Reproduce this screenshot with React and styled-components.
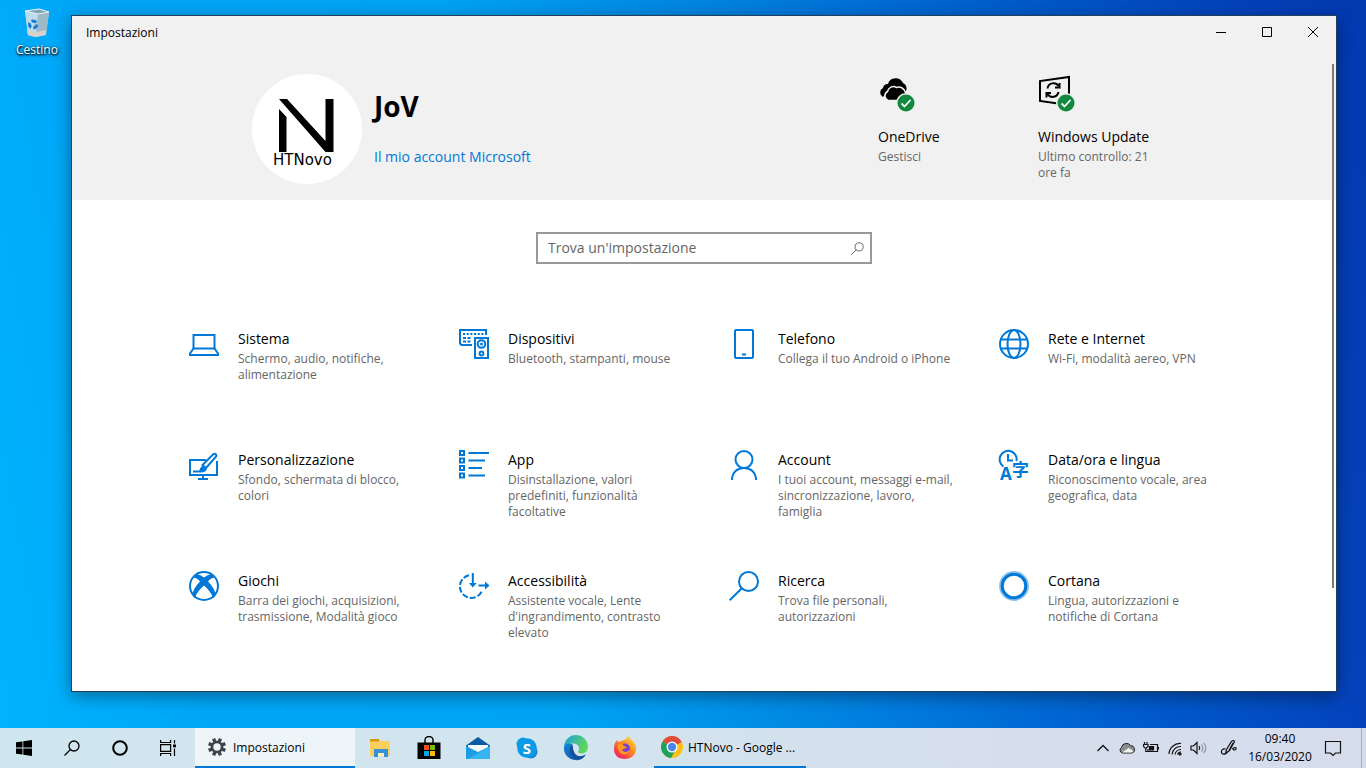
import React from 'react'
import styled, { createGlobalStyle } from 'styled-components';

const GlobalStyle = createGlobalStyle`
    * {
        box-sizing: border-box;
    }
    body {
        margin: 0;
        font-family: "Open Sans", "Noto Sans", sans-serif;
        font-size: 12px;
        color: #000;
    }
    button, input {
        font-family: inherit;
        color: inherit;
    }
    svg {
        display: block;
        flex-shrink: 0;
    }
`;

const blue = '#0078d7';

/* ---------- icons ---------- */

function LineIcon({ children }) {
    return (
        <svg width="30" height="30" viewBox="0 0 30 30" fill="none" stroke={blue} strokeWidth="2" overflow="visible" aria-hidden="true">
            {children}
        </svg>
    )
}

const icons = {
    system: (
        <LineIcon>
            <path d="M4.500 6h21v13.500h-21z" />
            <path d="M4.500 19.500L1 24.500V26h28v-1.500L25.500 19.500" />
        </LineIcon>
    ),
    devices: (
        <LineIcon>
            <path d="M13 16H2.500L1 14.500V1h26v5" />
            <path d="M4 5h21" strokeDasharray="2 1.700" />
            <path d="M4 9h8M4 12.500h8" strokeDasharray="3 1.500" />
            <path d="M16 9h13v20H16z" />
            <circle cx="22.500" cy="15" r="3.800" />
            <circle cx="22.500" cy="15" r="0.600" />
            <circle cx="22.500" cy="24.500" r="1.900" />
        </LineIcon>
    ),
    phone: (
        <LineIcon>
            <rect x="6" y="1" width="18" height="28" rx="1" />
            <path d="M13 25.500h4" />
        </LineIcon>
    ),
    network: (
        <LineIcon>
            <circle cx="15" cy="15" r="14" />
            <ellipse cx="15" cy="15" rx="6.500" ry="14" />
            <path d="M2 10.500h26M2 19.500h26" />
        </LineIcon>
    ),
    personalization: (
        <LineIcon>
            <path d="M17 10H1v15h27V11" />
            <path d="M14 25v4M9 29h10" />
            <path d="M13.500 15L24 4.500c2-1.500 4.500 0 2.700 2.500L17 18z" fill="#fff" strokeWidth="2" />
            <path d="M10 21.500c1-1 .500-5 4-5.500 3 0 4 3 2 4.500-1.500 1.500-4 1.500-6 1z" fill={blue} stroke="none" />
            <path d="M4 21.500h8c3 0 4.500-1 5-3.500" />
        </LineIcon>
    ),
    apps: (
        <LineIcon>
            <path d="M1 1h4v4H1zM1 8.500h4v4H1zM1 16h4v4H1zM1 23.500h4v4H1z" />
            <path d="M9.500 3H30M9.500 10.500H26M9.500 18H23M9.500 25.500H26" />
        </LineIcon>
    ),
    account: (
        <LineIcon>
            <circle cx="15" cy="9.500" r="8.500" />
            <path d="M3 30c0-8 5.500-12 12-12s12 4 12 12" />
        </LineIcon>
    ),
    time: (
        <LineIcon>
            <path d="M4.500 16.500A8.500 8.500 0 1 1 17.500 11" />
            <path d="M9 4v6.500h5" />
            <text x="1" y="30" fontFamily="Open Sans" fontWeight="700" fontSize="17" fill={blue} stroke="none">A</text>
            <text x="13" y="26" fontFamily="Noto Sans CJK JP" fontWeight="700" fontSize="17" fill={blue} stroke="none">字</text>
        </LineIcon>
    ),
    gaming: (
        <LineIcon>
            <circle cx="15" cy="15" r="14" />
            <path
                d="M5.500 4.500Q9 2 15 6.500 21 2 24.500 4.500L25.500 6.500Q21.500 7 19 10.500 26.500 18 26.500 24.500L24.500 27Q21 19.500 15 14.500 9 19.500 5.500 27L3.500 24.500Q3.500 18 11 10.500 8.500 7 4.500 6.500Z"
                fill={blue}
                stroke="none"
            />
        </LineIcon>
    ),
    accessibility: (
        <LineIcon>
            <path d="M10 4.200A11.500 11.500 0 1 0 23.300 19" strokeDasharray="6 2" />
            <path d="M13.800 2v12M19.500 14.500h9" />
            <path d="M10 12h7.600l-3.800 4.500zM26 10.500l4.500 4-4.500 4z" fill={blue} stroke="none" />
        </LineIcon>
    ),
    search: (
        <LineIcon>
            <circle cx="19.500" cy="10.500" r="9.500" />
            <path d="M12.800 17.200L.700 29.300" />
        </LineIcon>
    ),
    cortana: (
        <LineIcon>
            <circle cx="15" cy="15" r="13.500" stroke="#8cc3ee" strokeWidth="3" />
            <circle cx="15" cy="15" r="11.800" strokeWidth="3" />
        </LineIcon>
    ),
};

function BinIcon() {
    return (
        <svg width="28" height="30" viewBox="0 0 28 30" aria-hidden="true">
            <path d="M2 3l15-2 9 3-3 23-12 2-6-2z" fill="#a9cfe3" />
            <path d="M2 3l13 3-2 23-8-3z" fill="#bcdcec" />
            <path d="M15 6l11-2-3 23-10 2z" fill="#9db9c8" />
            <path d="M4 22l9 2 10-2-.500 5-9.500 2-8-2z" fill="#d5d2cc" />
            <path d="M2 3l14-2 10 3-11 2z" fill="#7fa5b8" stroke="#e7f3f8" />
            <circle cx="10" cy="16.500" r="3.500" fill="none" stroke="#1c7cd5" strokeWidth="3" strokeDasharray="5 2.300" />
        </svg>
    )
}

function AvatarLogo() {
    return (
        <svg width="110" height="110" viewBox="0 0 110 110" role="img" aria-label="HTNovo">
            <path d="M27 35l7.500 8v35H27z" />
            <path d="M27 25h8l38.500 42V25h8v53h-8z" />
            <text x="21" y="91" fontFamily="DejaVu Sans" fontSize="15">HTNovo</text>
        </svg>
    )
}

function CheckBadge() {
    return (
        <g stroke="none">
            <circle cx="28" cy="28" r="10" fill="#f1f1f1" />
            <circle cx="28" cy="28" r="8.500" fill="#10893e" />
            <path d="M23.500 28.500l3 3 6-6.500" fill="none" stroke="#fff" strokeWidth="1.800" />
        </g>
    )
}

function OneDriveIcon() {
    return (
        <svg width="38" height="38" viewBox="0 0 38 38" aria-hidden="true">
            <path d="M5 22a5 5 0 0 1 0-9 5 5 0 0 1 5-4 8 8 0 0 1 15-1 6 6 0 0 1 3 8H10z" />
            <path d="M10 25.500a5 5 0 0 1-.500-9 6 6 0 0 1 9-4 7 7 0 0 1 9 5 4.500 4.500 0 0 1 0 8z" stroke="#f1f1f1" strokeWidth="1.500" />
            <CheckBadge />
        </svg>
    )
}

function UpdateIcon() {
    return (
        <svg width="38" height="38" viewBox="0 0 38 38" fill="none" stroke="#000" strokeWidth="2" aria-hidden="true">
            <path d="M31 19V2L2 6v20l18 2.500" />
            <path d="M9.500 13.500a6 6 0 0 1 11-2.500M20.500 17a6 6 0 0 1-11 2" />
            <path d="M21.500 8v4.500H17M8.500 22.500V18H13" />
            <CheckBadge />
        </svg>
    )
}

function Magnifier({ size, color, width }) {
    return (
        <svg width={size} height={size} viewBox="0 0 16 16" fill="none" stroke={color} strokeWidth={width} aria-hidden="true">
            <circle cx="10" cy="6" r="5" />
            <path d="M6.500 9.500L.500 15.500" />
        </svg>
    )
}

function GearIcon() {
    const teeth = [0, 45, 90, 135, 180, 225, 270, 315];
    return (
        <svg width="18" height="18" viewBox="0 0 18 18" aria-hidden="true">
            <circle cx="9" cy="9" r="5" fill="none" stroke="#404448" strokeWidth="2.600" />
            {teeth.map(a => (
                <rect key={a} x="7.300" y="0" width="3.400" height="3.500" fill="#404448" transform={`rotate(${a + 22.5} 9 9)`} />
            ))}
        </svg>
    )
}

const launchers = [
    {
        name: 'Esplora file',
        icon: (
            <svg width="24" height="24" viewBox="0 0 24 24">
                <path d="M2 3h9l2 2h9v15H2z" fill="#fbcf5d" />
                <path d="M2 3h9v2.500H2z" fill="#d9980f" />
                <path d="M6 13h14v8h-4v-4h-6v4H6z" fill="#3590d8" />
                <path d="M10 17h6v3h-6z" fill="#fff0b8" />
            </svg>
        ),
    },
    {
        name: 'Microsoft Store',
        icon: (
            <svg width="24" height="24" viewBox="0 0 24 24">
                <path d="M8 7V4a4 3.500 0 0 1 8 0v3" fill="none" stroke="#000" strokeWidth="1.400" />
                <path d="M.500 6.500h23V23H.500z" />
                <path d="M7 9h5v5H7z" fill="#f25022" />
                <path d="M13 9h5v5h-5z" fill="#7fba00" />
                <path d="M7 15h5v5H7z" fill="#00a4ef" />
                <path d="M13 15h5v5h-5z" fill="#ffb900" />
            </svg>
        ),
    },
    {
        name: 'Posta',
        icon: (
            <svg width="24" height="24" viewBox="0 0 24 24">
                <path d="M0 9.500L12 1l12 8.500V14H0z" fill="#0a5aa8" />
                <path d="M2 9h20v7H2z" fill="#f5f9fc" />
                <path d="M0 10l12 6 12-6v13H0z" fill="#1c9ce5" />
                <path d="M24 10v13H2z" fill="#36b4f2" />
            </svg>
        ),
    },
    {
        name: 'Skype',
        icon: (
            <svg width="24" height="24" viewBox="0 0 24 24">
                <circle cx="8" cy="8" r="6.500" fill="#0f9fe6" />
                <circle cx="16" cy="16" r="6.500" fill="#0a86d8" />
                <circle cx="12" cy="12" r="9.800" fill="#0c99e5" />
                <text x="12" y="17.500" textAnchor="middle" fontFamily="Open Sans" fontWeight="700" fontSize="15" fill="#fff">S</text>
            </svg>
        ),
    },
    {
        name: 'Microsoft Edge',
        icon: (
            <svg width="26" height="26" viewBox="0 0 24 24">
                <defs>
                    <linearGradient id="edgeTop" x1="0" x2="1" y1="0" y2="0.4">
                        <stop offset="0" stopColor="#1b9de2" />
                        <stop offset="1" stopColor="#5fd75b" />
                    </linearGradient>
                    <linearGradient id="edgeLow" x1="0" x2="1" y1="0" y2="1">
                        <stop offset="0" stopColor="#1683d8" />
                        <stop offset="1" stopColor="#0c4f9e" />
                    </linearGradient>
                </defs>
                <path d="M1 11A11 11 0 0 1 23 11c0 4-3 6-6 6-4 0-3-2-2-4 0-4-4-6-7-5-4 0-6 2-7 3z" fill="url(#edgeTop)" />
                <path d="M1 11c1-3 5-4 8-2-4 4-1 11 6 11 3 0 5-1 6-2-2 4-6 6-10 5C5 22.500 0 17 1 11z" fill="url(#edgeLow)" />
                <path d="M9 9c-5 3-3 11 3 13 4 .500 8-2 9-4-7 4-12 0-12-9z" fill="#124f9c" />
            </svg>
        ),
    },
    {
        name: 'Firefox',
        icon: (
            <svg width="24" height="24" viewBox="0 0 24 24">
                <defs>
                    <linearGradient id="fox" x1="1" x2="0.2" y1="0" y2="1">
                        <stop offset="0" stopColor="#fff04a" />
                        <stop offset="0.5" stopColor="#ff8a1e" />
                        <stop offset="1" stopColor="#f5156c" />
                    </linearGradient>
                </defs>
                <path d="M1 13c0-4 1-7 3-9l1 2 3-1 3-1c2 0 3-3 5-4 0 3 5 4 7 10 1 8-4 13-11 13S1 19 1 13z" fill="url(#fox)" />
                <circle cx="12" cy="12.500" r="5" fill="#7b3fd0" />
                <path d="M5 8c3-1 5 0 6 2l3 1c-1 2-4 1-5 3 2 3 6 2 8 0-1 5-9 6-11 1-1-2-2-4-1-7z" fill="#ff9a1c" />
            </svg>
        ),
    },
];

function ChromeIcon() {
    return (
        <svg width="24" height="24" viewBox="0 0 24 24" aria-hidden="true">
            <circle cx="12" cy="12" r="11" fill="#fbc116" />
            <path d="M12 12L2.500 6.500A11 11 0 0 1 21.500 6.500z" fill="#df4b3e" />
            <path d="M2.500 6.500A11 11 0 0 0 11 23l5-9-4-2z" fill="#1fa05b" />
            <path d="M12 7h9.700L12 12z" fill="#df4b3e" />
            <circle cx="12" cy="12" r="5.500" fill="#fff" />
            <circle cx="12" cy="12" r="4.200" fill="#4a86ee" />
        </svg>
    )
}

const trayIcons = [
    {
        name: 'Mostra icone nascoste',
        icon: (
            <svg width="16" height="16" viewBox="0 0 16 16" fill="none" stroke="#111" strokeWidth="1.300">
                <path d="M2.500 11L8 5.500l5.500 5.500" />
            </svg>
        ),
    },
    {
        name: 'OneDrive',
        icon: (
            <svg width="16" height="16" viewBox="0 0 16 16">
                <path d="M3.500 13a3 3 0 0 1-1-5.500 5 5 0 0 1 9-2 4 4 0 0 1 2 7.500z" fill="#8d8d8d" stroke="#222" />
                <path d="M3 12.500L9.500 8l5 3-1.500 1.500z" fill="#f3f3f3" />
            </svg>
        ),
    },
    {
        name: 'Batteria',
        icon: (
            <svg width="16" height="16" viewBox="0 0 16 16" fill="none" stroke="#111" strokeWidth="1.200">
                <path d="M7 4.500h7.500v7H5V9M15.500 7v2.500M1.500 2v2M4 2v2M.500 4.500h4.500v2L3.500 8H2L.500 6.500zM2.800 8v3.500H5" />
                <path d="M6.500 6.500h4V10h-4z" fill="#111" />
            </svg>
        ),
    },
    {
        name: 'Rete',
        icon: (
            <svg width="16" height="16" viewBox="0 0 16 16" fill="none" stroke="#111" strokeWidth="1.200">
                <path d="M2 14A11 11 0 0 1 14 3.500M5 14.500A8.500 8.500 0 0 1 14 6.500M8 14.500A6 6 0 0 1 14 9.500M10.500 14.500A3.500 3.500 0 0 1 14 12" />
                <circle cx="13" cy="14" r="1" fill="#111" />
            </svg>
        ),
    },
    {
        name: 'Volume',
        icon: (
            <svg width="18" height="16" viewBox="0 0 18 16" fill="none" stroke="#111" strokeWidth="1.200">
                <path d="M1 6h2.500L7 2.500v11L3.500 10H1z" />
                <path d="M9 6q1.500 2 0 4" />
                <path d="M11.500 4.500q2.500 3.500 0 7M14 3q3.500 5 0 10" stroke="#8c9299" />
            </svg>
        ),
    },
];

/* ---------- data ---------- */

const categories = [
    { id: 'system', title: 'Sistema', text: 'Schermo, audio, notifiche, alimentazione' },
    { id: 'devices', title: 'Dispositivi', text: 'Bluetooth, stampanti, mouse' },
    { id: 'phone', title: 'Telefono', text: 'Collega il tuo Android o iPhone' },
    { id: 'network', title: 'Rete e Internet', text: 'Wi-Fi, modalità aereo, VPN' },
    { id: 'personalization', title: 'Personalizzazione', text: 'Sfondo, schermata di blocco, colori' },
    { id: 'apps', title: 'App', text: 'Disinstallazione, valori predefiniti, funzionalità facoltative' },
    { id: 'account', title: 'Account', text: 'I tuoi account, messaggi e-mail, sincronizzazione, lavoro, famiglia' },
    { id: 'time', title: 'Data/ora e lingua', text: 'Riconoscimento vocale, area geografica, data' },
    { id: 'gaming', title: 'Giochi', text: 'Barra dei giochi, acquisizioni, trasmissione, Modalità gioco' },
    { id: 'accessibility', title: 'Accessibilità', text: "Assistente vocale, Lente d'ingrandimento, contrasto elevato" },
    { id: 'search', title: 'Ricerca', text: 'Trova file personali, autorizzazioni' },
    { id: 'cortana', title: 'Cortana', text: 'Lingua, autorizzazioni e notifiche di Cortana' },
];

/* ---------- components ---------- */

function SettingsWindow() {
    return (
        <Window>
            <Header>
                <TitleBar>
                    <WindowTitle>Impostazioni</WindowTitle>
                    <CaptionButton aria-label="Riduci a icona">
                        <svg width="10" height="10" stroke="#000"><path d="M0 5.500h10" /></svg>
                    </CaptionButton>
                    <CaptionButton aria-label="Ingrandisci">
                        <svg width="10" height="10" stroke="#000" fill="none"><path d="M.500.500h9v9h-9z" /></svg>
                    </CaptionButton>
                    <CaptionButton aria-label="Chiudi">
                        <svg width="10" height="10" stroke="#000"><path d="M0 0l10 10M10 0L0 10" /></svg>
                    </CaptionButton>
                </TitleBar>
                <Hero>
                    <Avatar><AvatarLogo /></Avatar>
                    <Profile>
                        <h1>JoV</h1>
                        <a href="#account">Il mio account Microsoft</a>
                    </Profile>
                    <Status href="#onedrive">
                        <OneDriveIcon />
                        <Name>OneDrive</Name>
                        <Caption>Gestisci</Caption>
                    </Status>
                    <Status href="#update">
                        <UpdateIcon />
                        <Name>Windows Update</Name>
                        <Caption>Ultimo controllo: 21 ore fa</Caption>
                    </Status>
                </Hero>
            </Header>
            <SearchBox>
                <input type="text" placeholder="Trova un'impostazione" aria-label="Trova un'impostazione" />
                <Magnifier size={13} color="#666" width={1.2} />
            </SearchBox>
            <Grid>
                {categories.map(c => (
                    <Category key={c.id} href={`#${c.id}`}>
                        {icons[c.id]}
                        <div>
                            <Name>{c.title}</Name>
                            <Caption>{c.text}</Caption>
                        </div>
                    </Category>
                ))}
            </Grid>
            <ScrollThumb />
        </Window>
    )
}

function Taskbar() {
    return (
        <Bar>
            <TaskButton aria-label="Start">
                <svg width="16" height="16" viewBox="0 0 16 16">
                    <path d="M0 2.300L6.500 1.400v6.200H0zM7.300 1.300L16 0v7.600H7.300zM0 8.400h6.500v6.200L0 13.700zM7.300 8.400H16V16l-8.700-1.300z" />
                </svg>
            </TaskButton>
            <TaskButton aria-label="Cerca"><Magnifier size={16} color="#000" width={1.3} /></TaskButton>
            <TaskButton aria-label="Cortana">
                <svg width="16" height="16" fill="none" stroke="#000" strokeWidth="2"><circle cx="8" cy="8" r="6.800" /></svg>
            </TaskButton>
            <TaskButton aria-label="Visualizzazione attività">
                <svg width="16" height="16" fill="none" stroke="#000" strokeWidth="1.200">
                    <path d="M.600 0v2.500h10V0M.600 16v-2.500h10V16M.600 4.600h10v6.800H.600zM14.500 0v3.500M14.500 8.500V16" />
                    <path d="M13 4.500h3v2.800h-3z" fill="#000" stroke="none" />
                </svg>
            </TaskButton>
            <AppButton $active>
                <GearIcon />
                <span>Impostazioni</span>
            </AppButton>
            {launchers.map(l => (
                <TaskButton key={l.name} aria-label={l.name} $launcher>{l.icon}</TaskButton>
            ))}
            <AppButton>
                <ChromeIcon />
                <span>HTNovo - Google ...</span>
            </AppButton>
            <Tray>
                {trayIcons.map(t => (
                    <TrayButton key={t.name} aria-label={t.name}>{t.icon}</TrayButton>
                ))}
                <TrayButton aria-label="Area di lavoro Windows Ink" $wide>
                    <svg width="18" height="18" viewBox="0 0 18 18" fill="none" stroke="#111" strokeWidth="1.200">
                        <path d="M6.500 10.500L11.500 2.500q2-2 3 0L9.500 11.500l-4 3z" />
                        <path d="M5.500 10c-3-.500-4.500 1.500-4 3.500s3.500 2.500 6-.500M9 11.500L13 4M13 9.500c2-2 4.500-.500 2.500 1-1.500 1-2.500 0-3-1.500" />
                    </svg>
                </TrayButton>
                <Clock>
                    <time>09:40</time>
                    <time>16/03/2020</time>
                </Clock>
                <TrayButton aria-label="Centro notifiche" $wide>
                    <svg width="18" height="18" fill="none" stroke="#111" strokeWidth="1.200">
                        <path d="M1.500 2.500h15v11.500h-5l-2.500 2.500L6.500 14h-5z" />
                    </svg>
                </TrayButton>
                <ShowDesktop aria-label="Mostra desktop" />
            </Tray>
        </Bar>
    )
}

export default function App() {
    return (
        <Desktop>
            <GlobalStyle />
            <Workspace>
                <DesktopIcon>
                    <BinIcon />
                    <span>Cestino</span>
                </DesktopIcon>
                <SettingsWindow />
            </Workspace>
            <Taskbar />
        </Desktop>
    )
}

/* ---------- styles ---------- */

const Desktop = styled.div`
    min-height: 100vh;
    display: flex;
    flex-direction: column;
    background: linear-gradient(80deg, #00b4fc 0%, #00a6f8 14%, #00a4f4 38%, #0084e2 56%, #005ccc 76%, #0444bc 90%, #0338b0 100%);
`;

const Workspace = styled.main`
    flex: 1;
    display: flex;
    align-items: stretch;
    padding: 15px 29px 36px 0;
`;

const DesktopIcon = styled.button`
    width: 71px;
    margin-top: -7px;
    padding: 0 0 0 3px;
    border: 0;
    background: none;
    align-self: flex-start;
    display: flex;
    flex-direction: column;
    align-items: center;
    gap: 4px;
    span {
        color: #fff;
        font-size: 12px;
        line-height: 16px;
        text-shadow: 0 1px 2px #000, 1px 1px 3px #000;
    }
`;

const Window = styled.section`
    flex: 1;
    position: relative;
    background: #fff;
    border: 1px solid #22405c;
    box-shadow: 0 4px 16px rgba(0, 0, 0, 0.4);
`;

const Header = styled.header`
    background: #f1f1f1;
    height: 184px;
`;

const TitleBar = styled.div`
    height: 32px;
    display: flex;
    align-items: stretch;
`;

const WindowTitle = styled.span`
    flex: 1;
    padding-left: 14px;
    font-size: 12px;
    line-height: 34px;
`;

const CaptionButton = styled.button`
    width: 46px;
    border: 0;
    background: none;
    display: flex;
    align-items: center;
    justify-content: center;
    &:hover {
        background: #dcdcdc;
    }
`;

const Hero = styled.div`
    max-width: 904px;
    margin: 0 auto;
    padding-top: 26px;
    display: flex;
    align-items: flex-start;
`;

const Avatar = styled.div`
    border-radius: 50%;
    background: #fff;
`;

const Profile = styled.div`
    flex: 1;
    padding: 14px 0 0 12px;
    h1 {
        margin: 0 0 23px;
        font-size: 28px;
        line-height: 36px;
        font-weight: 700;
    }
    a {
        display: block;
        font-size: 14px;
        line-height: 20px;
        color: ${blue};
        text-decoration: none;
    }
`;

const Name = styled.h2`
    margin: 0 0 2px;
    font-size: 14px;
    line-height: 20px;
    font-weight: 400;
    white-space: nowrap;
    color: #000;
`;

const Caption = styled.p`
    margin: 0;
    font-size: 12px;
    line-height: 16px;
    color: #666;
`;

const Status = styled.a`
    width: 118px;
    padding-top: 1px;
    text-decoration: none;
    & + & {
        margin-left: 42px;
    }
    svg {
        margin-bottom: 14px;
    }
`;

const SearchBox = styled.label`
    width: 336px;
    height: 32px;
    margin: 32px auto 65px;
    padding: 0 6px 0 10px;
    border: 2px solid #999;
    display: flex;
    align-items: center;
    input {
        flex: 1;
        min-width: 0;
        padding: 0 0 2px;
        border: 0;
        outline: 0;
        background: none;
        font-size: 14px;
        &::placeholder {
            color: #666;
            opacity: 1;
        }
    }
`;

const Grid = styled.nav`
    max-width: 1080px;
    margin: 0 auto;
    display: grid;
    grid-template-columns: repeat(4, 1fr);
    grid-template-rows: repeat(2, 121px) auto;
`;

const Category = styled.a`
    display: flex;
    align-items: flex-start;
    gap: 19px;
    padding: 0 20px 0 25px;
    text-decoration: none;
`;

const ScrollThumb = styled.div`
    position: absolute;
    top: 48px;
    right: 2px;
    width: 2px;
    height: 524px;
    background: #7a7a7a;
`;

const Bar = styled.footer`
    height: 40px;
    display: flex;
    align-items: stretch;
    background: linear-gradient(90deg, #d0e6ee 0%, #d2e5ef 40%, #d6deec 75%, #d5dcec 100%);
`;

const TaskButton = styled.button`
    width: ${props => props.$launcher ? '49px' : '48px'};
    padding: 0;
    border: 0;
    background: none;
    display: flex;
    align-items: center;
    justify-content: center;
    &:hover {
        background: rgba(255, 255, 255, 0.4);
    }
`;

const AppButton = styled.button`
    width: ${props => props.$active ? '160px' : '152px'};
    margin-left: ${props => props.$active ? '3px' : '5px'};
    padding: 0 4px 0 ${props => props.$active ? '13px' : '6px'};
    border: 0;
    border-bottom: 2px solid ${blue};
    background: ${props => props.$active ? '#edf5f9' : 'none'};
    display: flex;
    align-items: center;
    gap: ${props => props.$active ? '7px' : '4px'};
    font-size: 12px;
    text-align: left;
    white-space: nowrap;
`;

const Tray = styled.div`
    margin-left: auto;
    display: flex;
    align-items: stretch;
`;

const TrayButton = styled.button`
    width: ${props => props.$wide ? '36px' : '24px'};
    padding: 0;
    border: 0;
    background: none;
    display: flex;
    align-items: center;
    justify-content: center;
`;

const Clock = styled.div`
    width: 66px;
    margin-right: 2px;
    display: flex;
    flex-direction: column;
    justify-content: center;
    text-align: center;
    line-height: 18px;
`;

const ShowDesktop = styled.button`
    width: 5px;
    margin-left: 10px;
    padding: 0;
    border: 0;
    border-left: 1px solid #a5aebb;
    background: none;
`;
